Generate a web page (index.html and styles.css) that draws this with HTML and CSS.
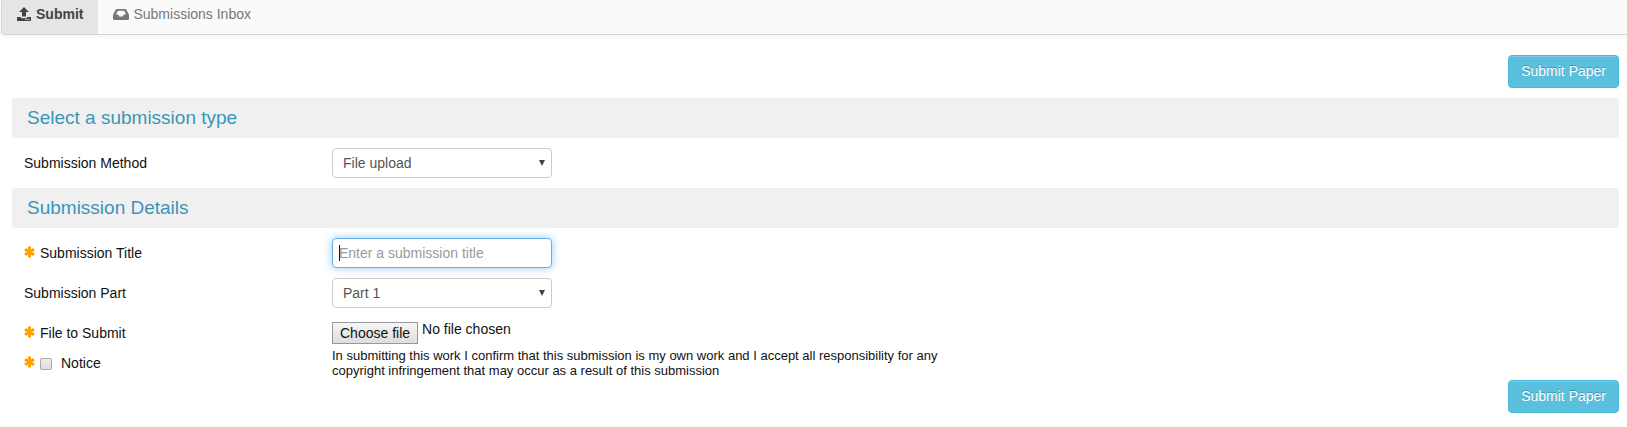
FILE: index.html
```html
<!DOCTYPE html>
<html lang="en">
  <head>
    <meta charset="UTF-8" />
    <meta name="viewport" content="width=device-width, initial-scale=1.0" />
    <title>Submit Paper</title>
    <link rel="stylesheet" href="styles.css">
  </head>
  <body>
    <svg class="sprite" aria-hidden="true">
      <symbol id="required" viewBox="0 0 11 12">
        <path d="M5.5 0.5V11.5M1 3.2L10 8.8M10 3.2L1 8.8" stroke="#ffa200" stroke-width="3" fill="none" />
      </symbol>
    </svg>

    <nav class="tabs">
      <a href="#" class="tab active">
        <svg class="icon" width="14" height="14" viewBox="0 0 14 14" fill="currentColor" aria-hidden="true">
          <path d="M7 0L12 5H9V9.5H5V5H2Z" />
          <path d="M0 10H3.6L4.6 11.2H9.4L10.4 10H14V14H0Z" />
          <path d="M8 12.5H12.6" stroke="#aaa" stroke-width="1" />
        </svg>
        Submit
      </a>
      <a href="#" class="tab">
        <svg class="icon" width="16" height="14" viewBox="0 0 16 14" fill="currentColor" aria-hidden="true">
          <path fill-rule="evenodd" d="M4 2H12Q13 2 13.4 2.8L15.7 7.2Q16 7.8 16 8.4V11.5Q16 13 14.5 13H1.5Q0 13 0 11.5V8.4Q0 7.8 .3 7.2L2.6 2.8Q3 2 4 2ZM4.8 3.8L2.9 7.6H5.2L6.2 9.4H9.8L10.8 7.6H13.1L11.2 3.8Z" />
        </svg>
        Submissions Inbox
      </a>
    </nav>

    <form id="submission" class="content">
      <div class="actions">
        <button type="submit" class="btn">Submit Paper</button>
      </div>

      <h2>Select a submission type</h2>
      <div class="row">
        <label class="name" for="method">Submission Method</label>
        <select id="method" class="field">
          <option>File upload</option>
        </select>
      </div>

      <h2>Submission Details</h2>
      <div class="row">
        <label class="name" for="title">
          <svg class="star" aria-hidden="true"><use href="#required" /></svg>
          Submission Title
        </label>
        <input type="text" id="title" class="field" placeholder="Enter a submission title" autofocus />
      </div>
      <div class="row">
        <label class="name" for="part">Submission Part</label>
        <select id="part" class="field">
          <option>Part 1</option>
        </select>
      </div>
      <div class="row">
        <label class="name" for="file">
          <svg class="star" aria-hidden="true"><use href="#required" /></svg>
          File to Submit
        </label>
        <div class="file">
          <span class="file-button">Choose file</span>
          <span class="file-name">No file chosen</span>
          <input type="file" id="file" />
        </div>
      </div>
      <div class="row notice">
        <div class="name">
          <svg class="star" aria-hidden="true"><use href="#required" /></svg>
          <input type="checkbox" id="notice" aria-describedby="notice-text" />
          <label for="notice">Notice</label>
        </div>
        <p id="notice-text">
          In submitting this work I confirm that this submission is my own work and I accept all responsibility for any
          copyright infringement that may occur as a result of this submission
        </p>
      </div>

      <div class="actions bottom">
        <button type="submit" class="btn">Submit Paper</button>
      </div>
    </form>
  </body>
</html>
```

FILE: styles.css
```css
* {
  box-sizing: border-box;
}

body {
  margin: 0;
  background-color: #fff;
  color: #111;
  font-family: Arial, "Liberation Sans", sans-serif;
  font-size: 14px;
  line-height: 20px;
}

input,
select,
button {
  font: inherit;
}

.sprite {
  position: absolute;
  width: 0;
  height: 0;
}

/* Tabs */
.tabs {
  display: flex;
  margin-left: 1px;
  background-color: #fafafa;
  border: 1px solid #d4d4d4;
  border-width: 0 0 1px 1px;
  border-bottom-left-radius: 4px;
  box-shadow: 0 1px 4px rgba(0, 0, 0, 0.07);
  overflow: hidden;
}

.tab {
  display: flex;
  align-items: center;
  gap: 4px;
  padding: 4px 15px 10px;
  color: #777;
  text-decoration: none;
}

.tab.active {
  gap: 5px;
  background-color: #e5e5e5;
  color: #444;
  font-weight: bold;
}

.icon {
  flex: none;
}

/* Form */
.content {
  padding: 20px 8px 12px 12px;
}

.actions {
  display: flex;
  justify-content: flex-end;
  margin-bottom: 10px;
}

.actions.bottom {
  margin: 2px 0 0;
}

.btn {
  padding: 6px 12px;
  border: 1px solid #46b8da;
  border-radius: 4px;
  background-color: #5bc0de;
  color: #fff;
  line-height: 19px;
  text-shadow: 0 -1px 0 rgba(0, 0, 0, 0.25);
  box-shadow: inset 0 1px 0 rgba(255, 255, 255, 0.2);
  cursor: pointer;
}

h2 {
  margin: 0;
  padding: 10px 15px;
  border-radius: 4px;
  background-color: #f0f0f0;
  color: #3a96b7;
  font-size: 19px;
  font-weight: normal;
  line-height: 20px;
}

.row {
  display: flex;
  align-items: center;
  padding-left: 12px;
  margin: 10px 0;
}

.name {
  display: flex;
  align-items: center;
  gap: 5px;
  width: 308px;
  flex: none;
}

.star {
  width: 11px;
  height: 12px;
  margin-bottom: 2px;
}

.field {
  width: 220px;
  height: 30px;
  padding: 4px 6px;
  border: 1px solid #ccc;
  border-radius: 4px;
  background-color: #fff;
  color: #555;
}

.field::placeholder {
  color: #999;
}

.field:focus {
  border-color: #66afe9;
  outline: 0;
  box-shadow: 0 0 8px rgba(82, 168, 236, 0.6);
}

/* steady caret while the box is empty */
.field:focus:placeholder-shown {
  background: linear-gradient(#111, #111) no-repeat 6px center / 1px 16px #fff;
}

select.field {
  appearance: none;
  padding: 4px 10px;
  background: url("data:image/svg+xml,%3Csvg xmlns='http://www.w3.org/2000/svg' width='6' height='6'%3E%3Cpath d='M0 0H6L3 6Z' fill='%23444'/%3E%3C/svg%3E") no-repeat right 6px center #fff;
}

.file {
  display: flex;
  gap: 4px;
  height: 30px;
  padding-top: 4px;
  position: relative;
}

.file-button {
  height: 22px;
  padding: 0 7px;
  border: 1px solid #999;
  background: linear-gradient(#f6f6f6, #ddd);
}

.file-name {
  line-height: 14px;
}

/* the real control lies over the styled button */
.file input {
  position: absolute;
  top: 0;
  left: 0;
  width: 100%;
  height: 100%;
  opacity: 0;
  cursor: pointer;
}

.notice {
  margin: 0;
}

.row:has(+ .notice) {
  margin-bottom: 0;
}

.notice label {
  margin-left: 4px;
}

.notice input {
  appearance: none;
  width: 12px;
  height: 12px;
  margin: 2px 0 0;
  border: 1px solid #aaa;
  border-radius: 2px;
  background: linear-gradient(#eee, #ddd);
}

.notice input:checked {
  background: #555;
}

.notice p {
  max-width: 620px;
  margin: 0;
  font-size: 13px;
  line-height: 15px;
}
```
